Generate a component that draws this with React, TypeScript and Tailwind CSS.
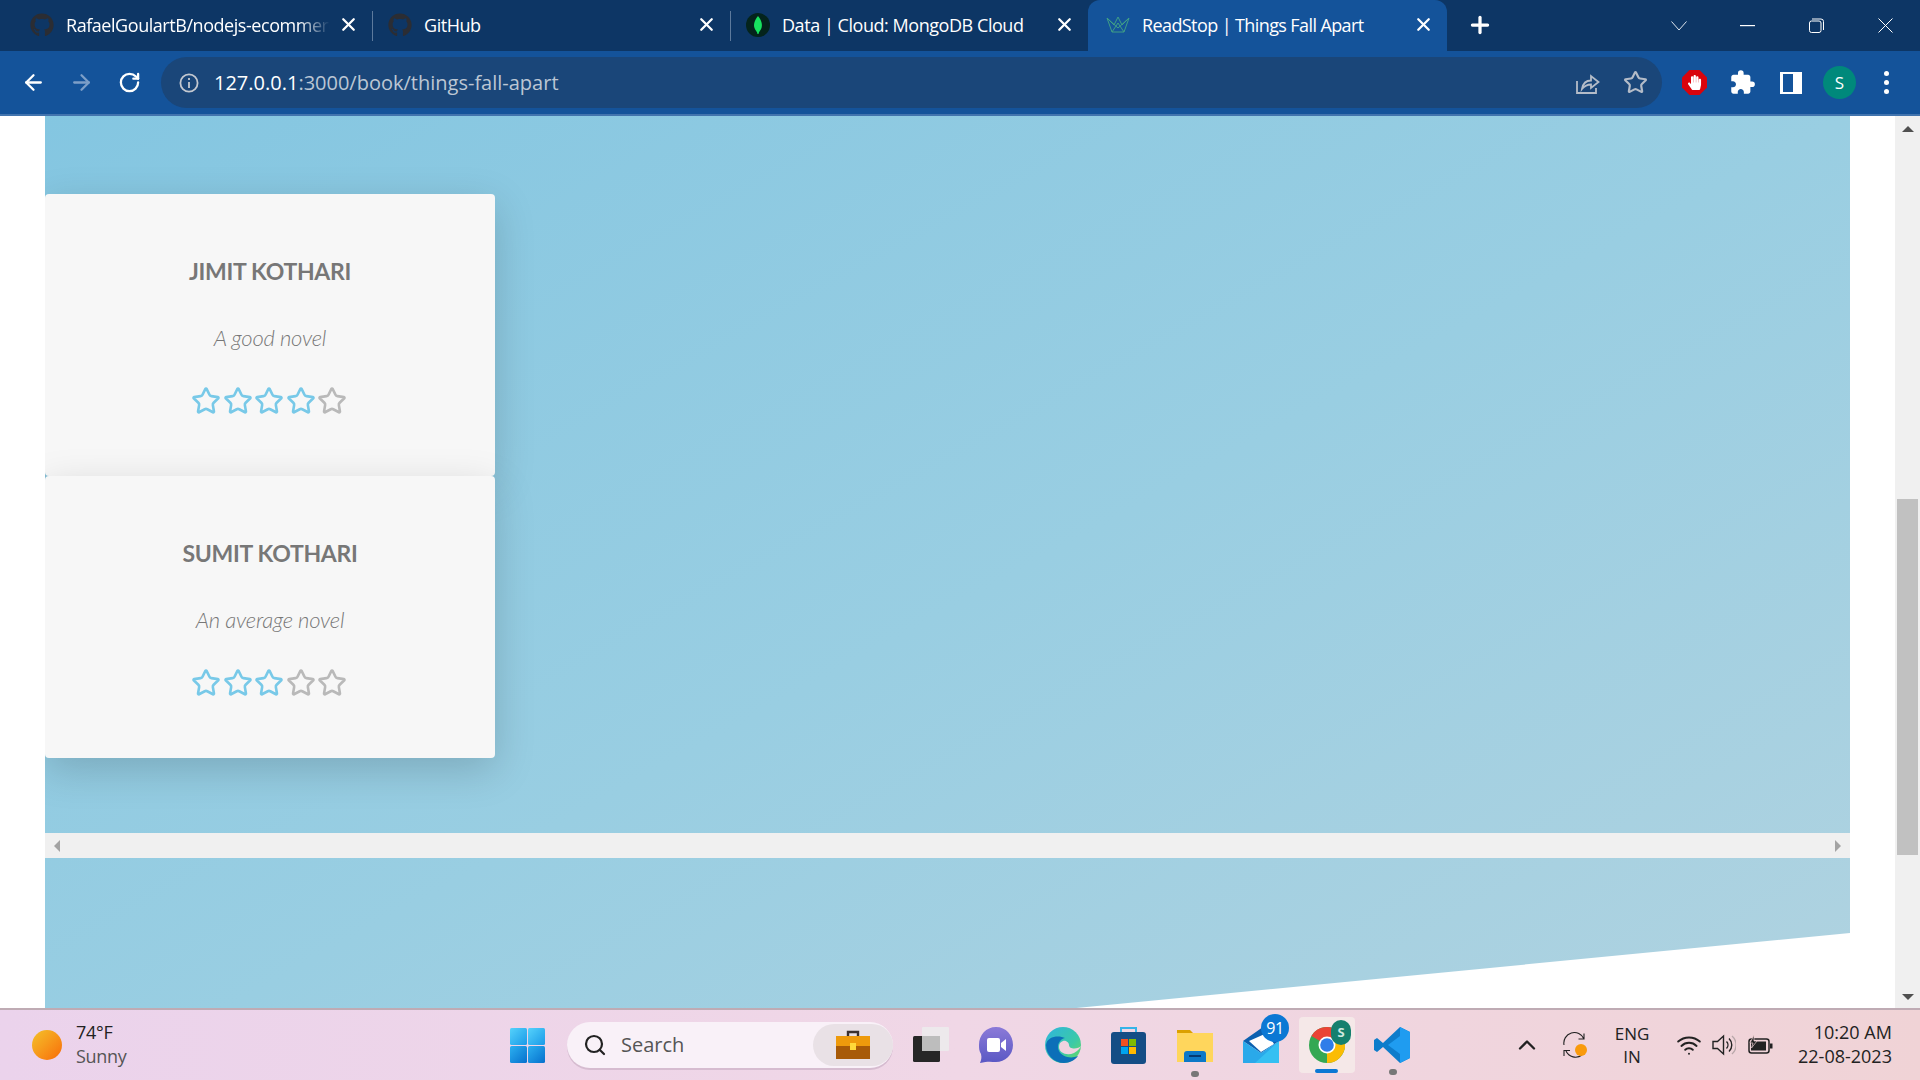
import React from "react";
import { ArrowLeft, ArrowRight, RotateCw, X, Plus, Star, Search, ChevronUp, Wifi } from "lucide-react";
import { FaGithub, FaHandPaper } from "react-icons/fa";
import { MdExtension } from "react-icons/md";

const uiFont = "font-['Open_Sans','Noto_Sans',sans-serif]";

const reviews = [
  { name: "JIMIT KOTHARI", note: "A good novel", stars: 4 },
  { name: "SUMIT KOTHARI", note: "An average novel", stars: 3 },
];

function Tab({ icon, title, fade, width, left, right, active }: { icon: React.ReactNode; title: string; fade?: boolean; width: string; left: string; right: string; active?: boolean }) {
  return (
    <div className={`relative flex h-full items-center pb-[2px] ${width} ${left} ${right} ${active ? "rounded-t-[12px] bg-[#14539a]" : ""}`}>
      <span className="flex w-[24px] shrink-0 justify-center">{icon}</span>
      <span
        className={`ml-[12px] flex-1 overflow-hidden text-[18px] leading-[24px] whitespace-nowrap text-white ${active ? "tracking-[-0.6px]" : "tracking-[-0.45px]"} ${fade ? "[mask-image:linear-gradient(to_right,black_88%,transparent_100%)]" : ""}`}
      >
        {title}
      </span>
      <X size={21} strokeWidth={2.6} className="ml-[8px] shrink-0 text-white" />
    </div>
  );
}

function CrownIcon() {
  return (
    <svg width="24" height="18" viewBox="0 0 24 18" fill="none" stroke="#3f9f86" strokeWidth="1">
      <path d="M1 2 L6 16 H18 L23 2 L16 9 L12 1 L8 9 Z" />
      <path d="M6 16 L12 7 L18 16 M1 2 L12 12 L23 2" />
    </svg>
  );
}

function MongoIcon() {
  return (
    <svg width="24" height="24" viewBox="0 0 24 24">
      <circle cx="12" cy="12" r="12" fill="#04241c" />
      <path d="M12 3 C8 8 7.5 12 8.5 15 C9.5 17.5 11 18.5 11.5 21 H12.5 C13 18.5 14.5 17.5 15.5 15 C16.5 12 16 8 12 3 Z" fill="#17e35f" />
    </svg>
  );
}

function ShareIcon() {
  return (
    <svg width="24" height="22" viewBox="0 0 24 22" fill="none" stroke="#b4bcc8" strokeWidth="1.8">
      <path d="M1 9 V21 H20 V16" />
      <path d="M6 17 C7 11 10 8.5 15 8.5 V4 L22.5 10 L15 16 V12.5 C11 12.5 8.5 14 6 17 Z" />
    </svg>
  );
}

function Toolbar() {
  return (
    <div className="flex h-[63px] shrink-0 items-start bg-[#14539a] pl-[21px] pt-[6px]">
      <div className="flex h-[51px] w-[122px] shrink-0 items-center">
        <ArrowLeft size={25} strokeWidth={2.2} className="text-white" />
        <ArrowRight size={25} strokeWidth={2.2} className="ml-[23px] text-[#7d9fc8]" />
        <RotateCw size={23} strokeWidth={2.4} className="ml-[24px] text-white" />
      </div>
      <div className="ml-[18px] flex h-[51px] w-[1501px] shrink-0 items-center rounded-full bg-[#1a4679] pl-[18px] pr-[11px]">
        <svg width="20" height="20" viewBox="0 0 20 20" fill="none" stroke="#c3c8d0" strokeWidth="1.8">
          <circle cx="10" cy="10" r="8.6" />
          <path d="M10 9 V15 M10 5 V7" />
        </svg>
        <span className={`ml-[15px] flex-1 text-[20px] leading-[26px] text-[#bcc6d4] ${uiFont}`}>
          <span className="text-white">127.0.0.1</span>:3000/book/things-fall-apart
        </span>
        <ShareIcon />
        <Star size={25} strokeWidth={2.1} className="ml-[23px] mr-[3px] text-[#b4bcc8]" />
      </div>
      <div className="flex h-[51px] items-center">
        <span className="ml-[20px] flex h-[25px] w-[25px] items-center justify-center bg-[#d9040c] [clip-path:polygon(30%_0,70%_0,100%_30%,100%_70%,70%_100%,30%_100%,0_70%,0_30%)]">
          <FaHandPaper size={15} className="text-white" />
        </span>
        <MdExtension size={27} className="ml-[22px] text-white" />
        <span className="ml-[24px] flex h-[22px] w-[22px] items-center justify-end border-y-[2px] border-l-[3px] border-r-[9px] border-white bg-[#14539a]" />
        <span className={`ml-[21px] flex h-[33px] w-[33px] items-center justify-center rounded-full bg-[#00897b] text-[17px] text-white ${uiFont}`}>S</span>
        <span className="ml-[28px] flex flex-col gap-[4px]">
          <span className="h-[5px] w-[5px] rounded-full bg-white" />
          <span className="h-[5px] w-[5px] rounded-full bg-white" />
          <span className="h-[5px] w-[5px] rounded-full bg-white" />
        </span>
      </div>
    </div>
  );
}

function TitleBar() {
  return (
    <div className={`flex h-[51px] shrink-0 items-stretch bg-[#0d3665] pl-[16px] ${uiFont}`}>
      <Tab width="w-[358px]" left="pl-[14px]" right="pr-[15px]" icon={<FaGithub size={24} className="text-[#2b2d33]" />} title="RafaelGoulartB/nodejs-ecommerce" fade />
      <div className="relative flex">
        <span className="absolute left-[-2px] top-[11px] h-[30px] w-px bg-[#5d7a9c]" />
        <Tab width="w-[358px]" left="pl-[14px]" right="pr-[15px]" icon={<FaGithub size={24} className="text-[#2b2d33]" />} title="GitHub" />
      </div>
      <div className="relative flex">
        <span className="absolute left-[-2px] top-[11px] h-[30px] w-px bg-[#5d7a9c]" />
        <Tab width="w-[356px]" left="pl-[14px]" right="pr-[13px]" icon={<MongoIcon />} title="Data | Cloud: MongoDB Cloud" />
      </div>
      <Tab active width="w-[359px]" left="pl-[18px]" right="pr-[13px]" icon={<CrownIcon />} title="ReadStop | Things Fall Apart" />
      <div className="ml-[20px] flex items-center pb-[2px]">
        <Plus size={26} strokeWidth={3} className="text-white" />
      </div>
      <div className="ml-[178px] flex items-center text-white">
        <svg width="16" height="10" viewBox="0 0 16 10" fill="none" stroke="#dfe6ee" strokeWidth="1"><path d="M0.5 0.5 L8 9 L15.5 0.5" /></svg>
        <svg className="ml-[53px]" width="15" height="2" viewBox="0 0 15 2"><rect width="15" height="1.2" fill="#fff" /></svg>
        <svg className="ml-[54px]" width="15" height="15" viewBox="0 0 15 15" fill="none" stroke="#fff" strokeWidth="1">
          <rect x="0.5" y="3" width="11.5" height="11.5" rx="2" />
          <path d="M3 1 H12 A2.5 2.5 0 0 1 14.5 3.5 V12" />
        </svg>
        <svg className="ml-[54px]" width="15" height="15" viewBox="0 0 15 15" stroke="#fff" strokeWidth="1"><path d="M0.5 0.5 L14.5 14.5 M14.5 0.5 L0.5 14.5" /></svg>
      </div>
    </div>
  );
}

function ReviewCard({ name, note, stars }: { name: string; note: string; stars: number }) {
  return (
    <div className="flex h-[282px] w-[450px] flex-col items-center rounded-[4px] bg-[#f7f7f7] pt-[59px] shadow-[0_12px_40px_rgba(0,0,0,0.17)]">
      <h3 className="text-[23px] leading-[36px] font-bold tracking-[-0.3px] text-[#777777]">{name}</h3>
      <p className="mt-[33px] text-[22px] leading-[32px] font-light tracking-[-0.2px] text-[#777777] italic">{note}</p>
      <div className="mt-[32px] mr-[2px] flex gap-[1.5px]">
        {[0, 1, 2, 3, 4].map((i) => (
          <Star key={i} size={30} strokeWidth={2.1} className={i < stars ? "text-[#78c9e8]" : "text-[#b9b9b9]"} />
        ))}
      </div>
    </div>
  );
}

function Page() {
  return (
    <div className="flex min-h-0 flex-1 overflow-hidden bg-white">
      <div className="flex-1 pl-[45px] pr-[45px]">
        <section className="h-[992px] bg-gradient-to-br from-[#84c6e1] via-[#99cee2] to-[#b2d3e0] font-['Lato',sans-serif] [clip-path:polygon(0_0,100%_0,100%_817px,0_100%)]">
          <div className="h-[717px] pt-[78px]">
            {reviews.map((r) => (
              <ReviewCard key={r.name} {...r} />
            ))}
          </div>
          <div className="relative flex h-[25px] items-center justify-between bg-[#f0f0f0] px-[9px]">
            <span className="h-0 w-0 border-y-[6px] border-r-[6px] border-y-transparent border-r-[#a3a3a3]" />
            <span className="h-0 w-0 border-y-[6px] border-l-[6px] border-y-transparent border-l-[#a3a3a3]" />
          </div>
        </section>
      </div>
      <div className="flex w-[25px] shrink-0 flex-col items-center bg-[#f0f0f0]">
        <span className="mt-[10px] h-0 w-0 border-x-[6px] border-b-[6px] border-x-transparent border-b-[#505050]" />
        <span className="mt-[367px] h-[356px] w-[21px] bg-[#c1c1c1]" />
        <span className="mt-[139px] h-0 w-0 border-x-[6px] border-t-[6px] border-x-transparent border-t-[#505050]" />
      </div>
    </div>
  );
}

function WinLogo() {
  return (
    <svg width="35" height="35" viewBox="0 0 35 35">
      <defs>
        <linearGradient id="w1" x1="0" y1="0" x2="1" y2="1">
          <stop offset="0" stopColor="#55d2fb" />
          <stop offset="1" stopColor="#1a9ae8" />
        </linearGradient>
        <linearGradient id="w2" x1="0" y1="0" x2="1" y2="1">
          <stop offset="0" stopColor="#2cb0f0" />
          <stop offset="1" stopColor="#0670cd" />
        </linearGradient>
      </defs>
      <rect x="0" y="0" width="17" height="17" rx="1.5" fill="url(#w1)" />
      <rect x="18" y="0" width="17" height="17" rx="1.5" fill="url(#w1)" />
      <rect x="0" y="18" width="17" height="17" rx="1.5" fill="url(#w2)" />
      <rect x="18" y="18" width="17" height="17" rx="1.5" fill="url(#w2)" />
    </svg>
  );
}

function Briefcase() {
  return (
    <svg width="34" height="30" viewBox="0 0 34 30">
      <path d="M12 6 V2 H22 V6" fill="none" stroke="#3a3030" strokeWidth="2.4" />
      <rect y="6" width="34" height="11" fill="#ee9a0c" />
      <rect y="16" width="34" height="13" fill="#a85a08" />
      <rect x="14" y="13" width="6" height="7" fill="#ffd83a" />
    </svg>
  );
}

function TaskView() {
  return (
    <svg width="36" height="36" viewBox="0 0 36 36">
      <rect x="0" y="9" width="27" height="26" rx="1.5" fill="#262626" />
      <rect x="9" y="0" width="27" height="24" rx="1" fill="#ececec" fillOpacity="0.85" />
      <rect x="9" y="9" width="18" height="15" fill="#bdbdbd" />
    </svg>
  );
}

function TeamsIcon() {
  return (
    <svg width="34" height="36" viewBox="0 0 34 36">
      <defs>
        <linearGradient id="t1" x1="0" y1="0" x2="0" y2="1">
          <stop offset="0" stopColor="#8b7ad8" />
          <stop offset="1" stopColor="#5a58c4" />
        </linearGradient>
      </defs>
      <path d="M17 0 C27 0 34 8 34 18 C34 28 26 35 17 35 C13 35 9 34 1 36 C2 33 3 31 2 27 C0 24 0 21 0 18 C0 8 7 0 17 0 Z" fill="url(#t1)" />
      <rect x="8" y="11" width="13" height="14" rx="2" fill="#fff" />
      <path d="M22 16 L27 12 V24 L22 20 Z" fill="#fff" />
    </svg>
  );
}

function EdgeIcon() {
  return (
    <svg width="36" height="36" viewBox="0 0 36 36">
      <defs>
        <linearGradient id="e1" x1="0" y1="0" x2="1" y2="1">
          <stop offset="0" stopColor="#2fb5de" />
          <stop offset="0.6" stopColor="#3bc9a8" />
          <stop offset="1" stopColor="#6fdc5c" />
        </linearGradient>
      </defs>
      <circle cx="18" cy="18" r="18" fill="url(#e1)" />
      <path d="M1 18 C1 28 9 36 19 36 C25 36 30 33 33 29 C26 32 17 30 14 24 C11 18 15 12 20 11 C14 8 2 9 1 18 Z" fill="#0c6fb8" />
      <path d="M14 20 C14 26 22 29 29 26 C33 24 35 21 36 19 C34 22 24 23 24 18 C24 15 20 13 18 14 C15 15 14 17 14 20 Z" fill="#f0d3e0" />
    </svg>
  );
}

function StoreIcon() {
  return (
    <svg width="35" height="38" viewBox="0 0 35 38">
      <path d="M10 8 V2 H25 V8" fill="none" stroke="#35b4e8" strokeWidth="2" />
      <rect y="6" width="35" height="32" rx="3" fill="#144d85" />
      <rect x="10" y="13" width="7" height="7" fill="#f25022" />
      <rect x="18" y="13" width="7" height="7" fill="#7fba00" />
      <rect x="10" y="21" width="7" height="7" fill="#00a4ef" />
      <rect x="18" y="21" width="7" height="7" fill="#ffb900" />
    </svg>
  );
}

function FolderIcon() {
  return (
    <svg width="36" height="34" viewBox="0 0 36 34">
      <path d="M0 2 H13 L17 6 H36 V12 H0 Z" fill="#dca100" />
      <rect y="5" width="36" height="29" fill="#ffd65c" />
      <path d="M7 34 V26 Q7 23 10 23 H26 Q29 23 29 26 V34 Z" fill="#0d78c7" />
      <rect x="12" y="27" width="12" height="2" fill="#063a72" />
    </svg>
  );
}

function MailIcon() {
  return (
    <svg width="36" height="36" viewBox="0 0 36 36">
      <path d="M0 14 L20 0 L36 14 L18 26 Z" fill="#0b60b0" />
      <path d="M6 14 L24 6 L31 17 L18 25 Z" fill="#ffffff" />
      <path d="M0 14 L18 26 L36 14 V36 H0 Z" fill="#2aa9ea" />
      <path d="M36 14 V36 H12 Z" fill="#35c0f2" />
    </svg>
  );
}

function ChromeIcon() {
  return (
    <svg width="36" height="36" viewBox="0 0 36 36">
      <circle cx="18" cy="18" r="18" fill="#34a853" />
      <path d="M18 18 L2.4 9 A18 18 0 0 1 33.6 9 Z" fill="#ea4335" />
      <path d="M18 18 L33.6 9 A18 18 0 0 1 18 36 Z" fill="#fbbc04" />
      <circle cx="18" cy="18" r="8.5" fill="#fff" />
      <circle cx="18" cy="18" r="6.8" fill="#2f7de9" />
    </svg>
  );
}

function VsCodeIcon() {
  return (
    <svg width="36" height="36" viewBox="0 0 36 36">
      <path d="M26 0 L36 5 V31 L26 36 L9 20 L3 25 L0 23 V13 L3 11 L9 16 Z" fill="#0d7ccb" />
      <path d="M26 0 L36 5 V31 L26 36 L26 9 L14 18 L26 27 Z" fill="#1f9cf0" />
    </svg>
  );
}

function SyncIcon() {
  return (
    <svg width="26" height="26" viewBox="0 0 26 26" fill="none" stroke="#222" strokeWidth="1.1">
      <path d="M1 13 A10.5 10.5 0 0 1 21 7 M21 1.5 V7 H15.5" />
      <path d="M19 23 A10.5 10.5 0 0 1 3 19 M1 24 V18.5 H7" />
      <circle cx="18" cy="18" r="6" fill="#f99a0c" stroke="none" />
    </svg>
  );
}

function Speaker() {
  return (
    <svg width="24" height="22" viewBox="0 0 24 22" fill="none" stroke="#222" strokeWidth="1.4">
      <path d="M1 7.5 H5.5 L11.5 2 V20 L5.5 14.5 H1 Z" />
      <path d="M14.5 7.5 A5 5 0 0 1 14.5 14.5" />
      <path d="M17 4.5 A9 9 0 0 1 17 17.5" />
      <path d="M20 2 A12 12 0 0 1 20 20" stroke="#b9a8aa" />
    </svg>
  );
}

function Battery() {
  return (
    <svg width="25" height="20" viewBox="0 0 25 20">
      <rect x="1" y="4" width="20" height="14" rx="2.5" fill="none" stroke="#222" strokeWidth="1.5" />
      <rect x="3" y="6.5" width="15" height="9" fill="#222" />
      <rect x="22" y="8.5" width="2.5" height="5" fill="#222" />
      <path d="M6 0 L2 8 H5 L3.5 13 L9 6 H6 Z" fill="#222" stroke="#f0d3d6" strokeWidth="0.7" />
    </svg>
  );
}

function Taskbar() {
  return (
    <div className={`flex h-[72px] shrink-0 items-center border-t-[2px] border-[#bfabb4] bg-gradient-to-r from-[#ebd3ec] via-[#f0d7e6] to-[#f0d3d6] text-[#222] ${uiFont}`}>
      <span className="ml-[32px] h-[30px] w-[30px] rounded-full bg-gradient-to-br from-[#f2c12a] to-[#f76a06]" />
      <div className="mb-[2px] ml-[14px] flex w-[60px] flex-col text-[18px] leading-[24px] tracking-[-0.3px]">
        <span>74°F</span>
        <span className="text-[#555]">Sunny</span>
      </div>
      <span className="ml-[374px] flex"><WinLogo /></span>
      <div className="ml-[22px] flex h-[46px] w-[326px] items-center rounded-full bg-[#f9f1f8] pl-[16px] shadow-[0_2px_0_#d6bcd0]">
        <Search size={24} strokeWidth={2.2} className="text-[#222]" />
        <span className="ml-[14px] flex-1 text-[20px] text-[#555]">Search</span>
        <span className="flex h-[42px] w-[80px] items-center justify-center rounded-full bg-[#e9e1e6]">
          <Briefcase />
        </span>
      </div>
      <span className="ml-[20px] flex"><TaskView /></span>
      <span className="ml-[30px] flex"><TeamsIcon /></span>
      <span className="ml-[32px] flex"><EdgeIcon /></span>
      <span className="ml-[30px] flex"><StoreIcon /></span>
      <span className="relative ml-[31px] flex">
        <FolderIcon />
        <span className="absolute left-[14px] top-[43px] h-[6px] w-[8px] rounded-full bg-[#777]" />
      </span>
      <span className="relative ml-[30px] flex">
        <MailIcon />
        <span className="absolute left-[18px] top-[-13px] flex h-[28px] w-[28px] items-center justify-center rounded-full bg-[#0b78d4] text-[16px] tracking-[-0.5px] text-white">91</span>
      </span>
      <span className="relative ml-[20px] flex h-[56px] w-[56px] items-center justify-center rounded-[4px] bg-[#f5e8e8]">
        <ChromeIcon />
        <span className="absolute left-[32px] top-[3px] flex h-[25px] w-[20px] items-center justify-center rounded-full bg-[#15806e] text-[13px] font-bold text-[#cfe8e0]">S</span>
        <span className="absolute bottom-0 left-[16px] h-[4px] w-[23px] rounded-full bg-[#0b78d4]" />
      </span>
      <span className="relative ml-[19px] flex">
        <VsCodeIcon />
        <span className="absolute left-[15px] top-[42px] h-[6px] w-[8px] rounded-full bg-[#777]" />
      </span>
      <ChevronUp size={28} strokeWidth={2} className="ml-[103px] text-[#222]" />
      <span className="ml-[22px] flex"><SyncIcon /></span>
      <div className="ml-[18px] flex w-[50px] flex-col items-center text-[17px] leading-[23px]">
        <span>ENG</span>
        <span>IN</span>
      </div>
      <Wifi size={26} strokeWidth={1.8} className="ml-[19px] text-[#222]" />
      <span className="ml-[10px] flex"><Speaker /></span>
      <span className="ml-[12px] flex"><Battery /></span>
      <div className="mb-[2px] ml-[25px] flex flex-col items-end text-[18px] leading-[24px]">
        <span>10:20 AM</span>
        <span>22-08-2023</span>
      </div>
    </div>
  );
}

export default function App() {
  return (
    <div className="flex h-screen w-screen flex-col overflow-hidden">
      <TitleBar />
      <Toolbar />
      <div className="h-[2px] shrink-0 bg-[#4274ae]" />
      <Page />
      <Taskbar />
    </div>
  );
}
